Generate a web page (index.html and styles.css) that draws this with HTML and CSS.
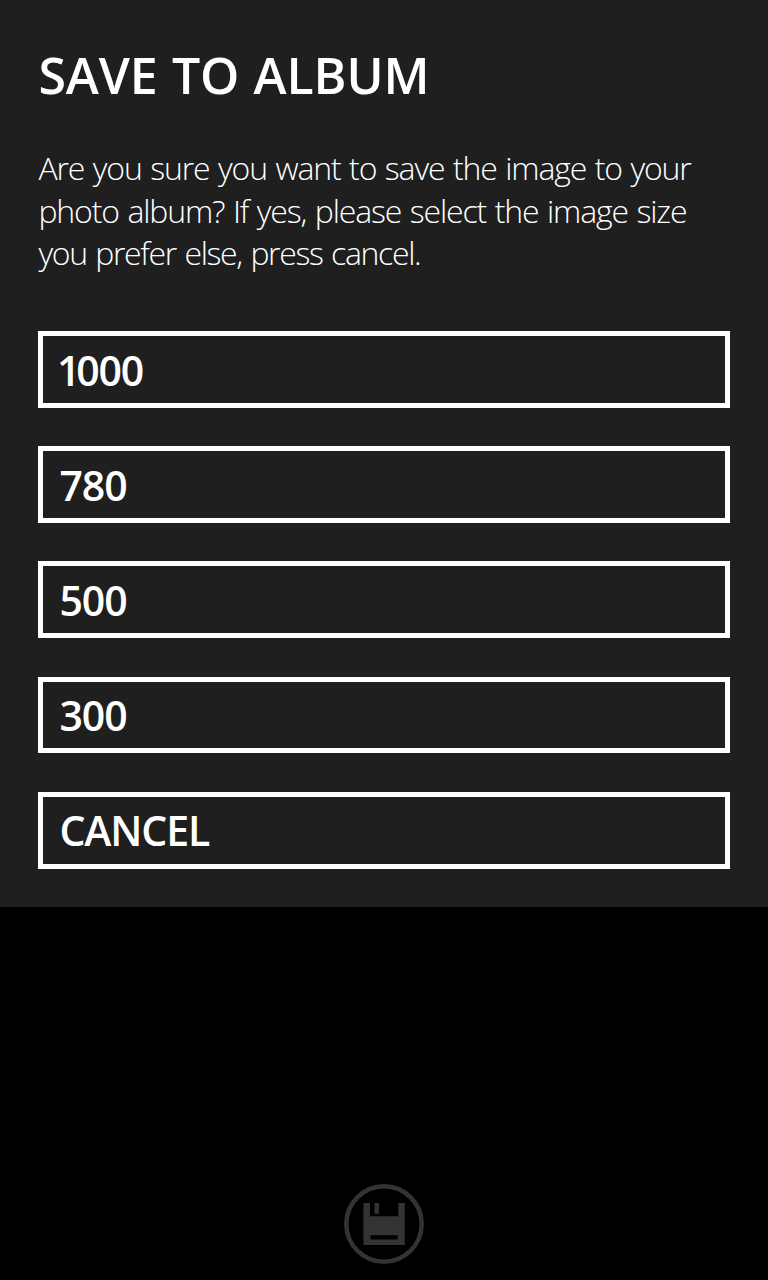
FILE: index.html
```html
<!DOCTYPE html>
<html>
<head>
<meta charset="utf-8">
<title>Save to album</title>
<link rel="stylesheet" href="styles.css">
</head>

<body>
<div class="dialog">
<h1>SAVE TO ALBUM</h1>
<p>
<span class="line1">Are you sure you want to save the image to your</span>
<span class="line2">photo album? If yes, please select the image size</span>
<span class="line3">you prefer else, press cancel.</span>
</p>
<div class="buttons">
<button class="large"><span class="one">1</span>000</button>
<button>780</button>
<button>500</button>
<button>300</button>
<button class="cancel">CANCEL</button>
</div>
</div>

<div class="appbar">
<svg class="save" viewBox="0 0 80 80">
<circle cx="40" cy="40" r="37.7" fill="none" stroke="#333" stroke-width="4.4"/>
<path fill="#333" fill-rule="evenodd" d="M19.4 19H26V32.3H54.3V19H60.8V61H19.4ZM26.6 51.3V55.6H53.6V51.3Z"/>
<path fill="#333" d="M30.5 19H35V29.8H30.5Z"/>
</svg>
</div>
</body>
</html>
```
FILE: styles.css
```css
body {
margin:0;
height:1280px;
display:flex;
flex-direction:column;
background-color:#000;
color:#FFF;
font-family:"Open Sans", "Noto Sans", sans-serif;
}
.dialog {
box-sizing:border-box;
height:907px;
padding:40px 38.4px 0;
background-color:#1F1F1F;
}
h1 {
margin:0;
font-size:50px;
font-weight:600;
line-height:70px;
letter-spacing:-0.1px;
word-spacing:1.4px;
white-space:nowrap;
}
p {
margin:37px 0 0;
font-size:32px;
font-weight:300;
line-height:42.5px;
white-space:nowrap;
}
p span {
display:block;
}
.line1, .line2 {
letter-spacing:-1.15px;
word-spacing:1.4px;
}
.line3 {
letter-spacing:-1.35px;
word-spacing:1.6px;
}
.buttons {
display:flex;
flex-direction:column;
gap:38.4px;
margin-top:56.5px;
}
button {
box-sizing:border-box;
height:76.8px;
padding:0 16px 0;
border:5px solid #FFF;
background:none;
color:#FFF;
font-family:inherit;
font-size:41px;
font-weight:600;
line-height:66px;
letter-spacing:-1px;
text-align:left;
}
.large {
padding:1px 16px 0 13.5px;
letter-spacing:-1.3px;
}
.one {
letter-spacing:-4px;
}
.cancel {
letter-spacing:-1.1px;
}
.appbar {
flex:1;
display:flex;
justify-content:center;
align-items:flex-end;
padding-bottom:16px;
}
.save {
width:80px;
height:80px;
}
```
